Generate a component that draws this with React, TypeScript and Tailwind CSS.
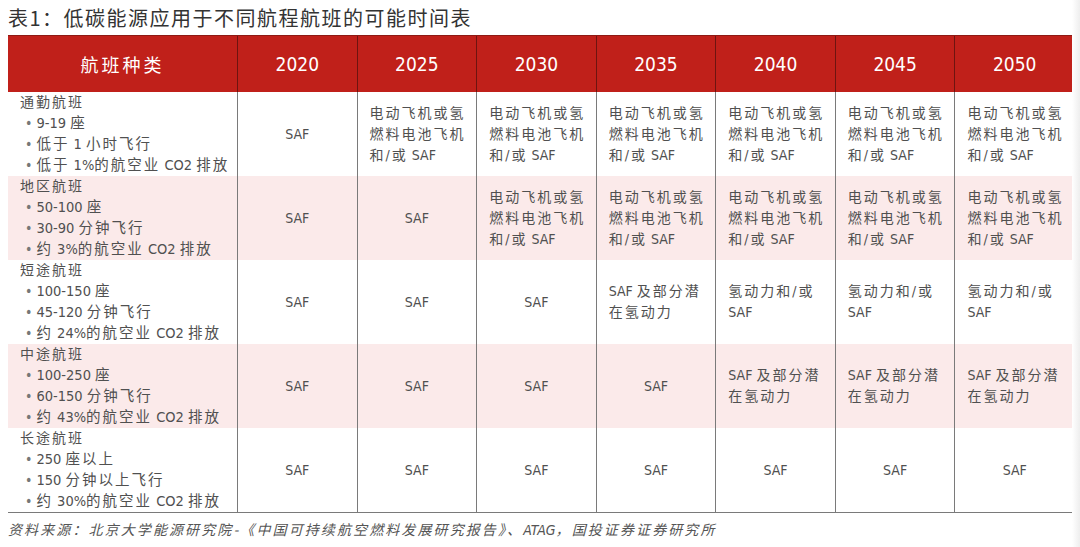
import React from 'react';

// font stacks: condensed latin first, CJK falls through to Noto
const latin = { fontFamily: '"DejaVu Sans", "Noto Sans CJK SC", sans-serif', fontStretch: 'condensed' };

const years = ['2020', '2025', '2030', '2035', '2040', '2045', '2050'];

const EF = '电动飞机或氢\n燃料电池飞机\n和/或 SAF';
const SP = 'SAF 及部分潜\n在氢动力';
const HY = '氢动力和/或\nSAF';

const rows = [
  { title: '通勤航班', items: ['9-19 座', '低于 1 小时飞行', '低于 1%的航空业 CO2 排放'], cells: ['SAF', EF, EF, EF, EF, EF, EF], pink: false },
  { title: '地区航班', items: ['50-100 座', '30-90 分钟飞行', '约 3%的航空业 CO2 排放'], cells: ['SAF', 'SAF', EF, EF, EF, EF, EF], pink: true },
  { title: '短途航班', items: ['100-150 座', '45-120 分钟飞行', '约 24%的航空业 CO2 排放'], cells: ['SAF', 'SAF', 'SAF', SP, HY, HY, HY], pink: false },
  { title: '中途航班', items: ['100-250 座', '60-150 分钟飞行', '约 43%的航空业 CO2 排放'], cells: ['SAF', 'SAF', 'SAF', 'SAF', SP, SP, SP], pink: true },
  { title: '长途航班', items: ['250 座以上', '150 分钟以上飞行', '约 30%的航空业 CO2 排放'], cells: ['SAF', 'SAF', 'SAF', 'SAF', 'SAF', 'SAF', 'SAF'], pink: false },
];

const CJK = /[\u4e00-\u9fff\u3000-\u303f\uff00-\uffef/]/;

/* split a string into CJK runs (spaced) and latin runs (tight) */
const Mixed = ({ text }: { text: string }) => {
  const parts = text.split(/([\u4e00-\u9fff\u3000-\u303f\uff00-\uffef/]+)/);
  return (
    <span>
      {parts.map((p, i) =>
        CJK.test(p) ? (
          <span key={i} className="tracking-[2px]">{p}</span>
        ) : (
          <span key={i}>{p}</span>
        )
      )}
    </span>
  );
};

const Cell = ({ text }: { text: string }) => {
  const lines = text.split('\n');
  const single = text === 'SAF';
  return (
    <div className={`h-full border-l border-[#7a7a7a] flex flex-col justify-center ${single ? 'items-center' : 'items-start pl-3'}`}>
      {lines.map((l, i) => (
        <div key={i} className="text-[14px] leading-[21px] text-[#505050] whitespace-nowrap">
          <Mixed text={l} />
        </div>
      ))}
    </div>
  );
};

export default function App() {
  return (
    <div className="w-[1080px] h-[547px] bg-white overflow-hidden relative" style={latin}>
      {/* faint grey strip at the right edge */}
      <div className="absolute right-0 top-0 bottom-0 w-[8px] bg-gradient-to-r from-white to-[#eeeeee]" />

      {/* title */}
      <div className="h-[35px] pl-[8px] flex items-center text-[20px] text-[#333] tracking-[1.5px]" style={{ fontFamily: '"Noto Sans CJK SC", sans-serif' }}>
        表1：低碳能源应用于不同航程航班的可能时间表
      </div>

      <div className="ml-[8px] w-[1066px]">
        {/* header */}
        <div className="grid grid-cols-[229px_repeat(7,1fr)] h-[57px] bg-[#c0201a] border-t border-[#8e1a14]">
          <div className="flex items-center justify-center text-white text-[18px] tracking-[3px]" style={{ fontFamily: '"Noto Sans CJK SC", sans-serif' }}>
            航班种类
          </div>
          {years.map((y) => (
            <div key={y} className="flex items-center justify-center border-l border-[#6e1410] text-white text-[19px]">
              {y}
            </div>
          ))}
        </div>

        {/* body rows */}
        {rows.map((r) => (
          <div key={r.title} className={`grid grid-cols-[229px_repeat(7,1fr)] h-[84px] ${r.pink ? 'bg-[#fbeaea]' : 'bg-white'}`}>
            <div className="pl-[12px] flex flex-col justify-center text-[14px] leading-[21px] text-[#505050] whitespace-nowrap">
              <div><Mixed text={r.title} /></div>
              {r.items.map((it) => (
                <div key={it} className="pl-[5px]">
                  <span className="text-[#777] mr-[4px]">•</span>
                  <span className="text-[14.5px]"><Mixed text={it} /></span>
                </div>
              ))}
            </div>
            {r.cells.map((c, i) => (
              <Cell key={i} text={c} />
            ))}
          </div>
        ))}
        <div className="h-px bg-[#7a7a7a]" />
      </div>

      {/* source note */}
      <div className="pl-[8px] mt-[6px] text-[14px] italic text-[#555] tracking-[2.1px] whitespace-nowrap" style={{ fontFamily: '"Noto Sans CJK SC", sans-serif' }}>
        资料来源：北京大学能源研究院-《中国可持续航空燃料发展研究报告》、<span className="tracking-normal" style={latin}>ATAG</span>，国投证券证券研究所
      </div>
    </div>
  );
}
